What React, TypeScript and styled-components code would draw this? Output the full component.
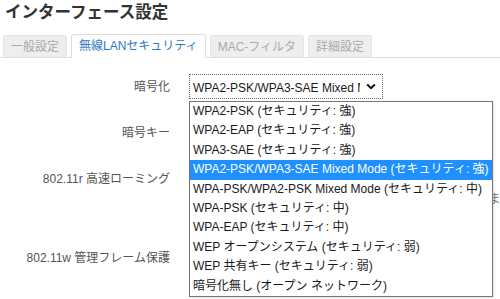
import React from "react";
import styled, { createGlobalStyle } from "styled-components";

const GlobalStyle = createGlobalStyle`
  html, body {
    margin: 0;
    padding: 0;
    background: #ffffff;
    overflow: hidden;
  }
  body {
    font-family: "Liberation Sans", "Noto Sans CJK JP", sans-serif;
    color: #555555;
  }
`;

const Page = styled.div`
  width: 500px;
  height: 299px;
  overflow: hidden;
`;

const Title = styled.h1`
  margin: 0;
  padding: 0 0 0 5px;
  height: 34px;
  font-size: 16.5px;
  line-height: 25px;
  font-weight: 700;
  color: #333333;
`;

const TabBar = styled.div`
  display: flex;
  align-items: flex-end;
  gap: 4px;
  padding-left: 3px;
  height: 23px;
  border-bottom: 1px solid #dddddd;
`;

const Tab = styled.div<{ $active?: boolean }>`
  box-sizing: border-box;
  padding: 0 7px;
  margin-bottom: -1px;
  font-size: 12px;
  line-height: 23px;
  border: 1px solid ${(p) => (p.$active ? "#dddddd" : "#e4e4e4")};
  border-bottom-color: ${(p) => (p.$active ? "#ffffff" : "#dddddd")};
  border-radius: 3px 3px 0 0;
  background: ${(p) => (p.$active ? "#ffffff" : "#eeeeee")};
  color: ${(p) => (p.$active ? "#2f78c8" : "#aaaaaa")};
  height: ${(p) => (p.$active ? "24px" : "23px")};
`;

const Form = styled.div`
  display: flex;
  flex-direction: column;
  gap: 20px;
  padding-top: 16px;
`;

const Row = styled.div`
  display: grid;
  grid-template-columns: 170px 1fr;
  column-gap: 19px;
  align-items: start;
`;

const Label = styled.div<{ $offset?: number }>`
  text-align: right;
  font-size: 12px;
  line-height: 25px;
  padding-top: ${(p) => p.$offset ?? 0}px;
  color: #555555;
  white-space: nowrap;
`;

const Field = styled.div`
  position: relative;
  min-width: 0;
`;

const SelectBox = styled.div`
  position: relative;
  width: 194px;
  height: 25px;
  box-sizing: border-box;
  border: 1px dotted #666666;
  display: flex;
  align-items: center;
  padding: 0 6px 0 3px;
  background: #ffffff;
  color: #1a1a1a;
  font-size: 12px;
`;

const SelectText = styled.span`
  flex: 1;
  overflow: hidden;
  white-space: nowrap;
  margin-right: 6px;
`;

const Chevron = styled.svg`
  width: 10px;
  height: 7px;
  flex-shrink: 0;
`;

const Input = styled.div`
  width: 194px;
  height: 25px;
  box-sizing: border-box;
  border: 1px solid #cccccc;
`;

const Check = styled.div`
  width: 13px;
  height: 13px;
  margin: 6px 0;
  box-sizing: border-box;
  border: 1px solid #999999;
  border-radius: 2px;
`;

const Help = styled.div`
  font-size: 12px;
  line-height: 17px;
  color: #777777;
  white-space: nowrap;
`;

const DropList = styled.ul`
  position: absolute;
  top: 27px;
  left: 0;
  z-index: 10;
  width: 304px;
  margin: 0;
  padding: 0;
  list-style: none;
  box-sizing: border-box;
  border: 1px solid #767676;
  background: #ffffff;
  box-shadow: 1px 1px 2px rgba(0, 0, 0, 0.12);
`;

const Option = styled.li<{ $selected?: boolean }>`
  height: 19.4px;
  line-height: 19.4px;
  padding-left: 3px;
  font-size: 12px;
  white-space: nowrap;
  overflow: hidden;
  background: ${(p) => (p.$selected ? "#1e90ff" : "transparent")};
  color: ${(p) => (p.$selected ? "#ffffff" : "#1a1a1a")};
`;

const options = [
  "WPA2-PSK (セキュリティ: 強)",
  "WPA2-EAP (セキュリティ: 強)",
  "WPA3-SAE (セキュリティ: 強)",
  "WPA2-PSK/WPA3-SAE Mixed Mode (セキュリティ: 強)",
  "WPA-PSK/WPA2-PSK Mixed Mode (セキュリティ: 中)",
  "WPA-PSK (セキュリティ: 中)",
  "WPA-EAP (セキュリティ: 中)",
  "WEP オープンシステム (セキュリティ: 弱)",
  "WEP 共有キー (セキュリティ: 弱)",
  "暗号化無し (オープン ネットワーク)",
];

const selectedIndex = 3;

export default function App() {
  return (
    <Page>
      <GlobalStyle />
      <Title>インターフェース設定</Title>
      <TabBar>
        <Tab>一般設定</Tab>
        <Tab $active>無線LANセキュリティ</Tab>
        <Tab>MAC-フィルタ</Tab>
        <Tab>詳細設定</Tab>
      </TabBar>
      <Form>
        <Row>
          <Label $offset={1}>暗号化</Label>
          <Field>
            <SelectBox>
              <SelectText>{options[selectedIndex]}</SelectText>
              <Chevron viewBox="0 0 10 7">
                <path
                  d="M1.2 1.5 L5 5.2 L8.8 1.5"
                  fill="none"
                  stroke="#111"
                  strokeWidth="2"
                />
              </Chevron>
            </SelectBox>
            <DropList>
              {options.map((opt, i) => (
                <Option key={i} $selected={i === selectedIndex}>
                  {opt}
                </Option>
              ))}
            </DropList>
          </Field>
        </Row>
        <Row>
          <Label $offset={1}>暗号キー</Label>
          <Field>
            <Input />
          </Field>
        </Row>
        <Row>
          <Label $offset={1}>802.11r 高速ローミング</Label>
          <Field>
            <Check />
            <Help>同じモビリティドメイン間の高速ローミングを有効にします</Help>
            <Help>セキュリティ設定が一致している必要があります</Help>
          </Field>
        </Row>
        <Row>
          <Label $offset={1}>802.11w 管理フレーム保護</Label>
          <Field>
            <Input />
            <Help>管理フレームの保護を行うかどうかを選択します。イ</Help>
          </Field>
        </Row>
      </Form>
    </Page>
  );
}
